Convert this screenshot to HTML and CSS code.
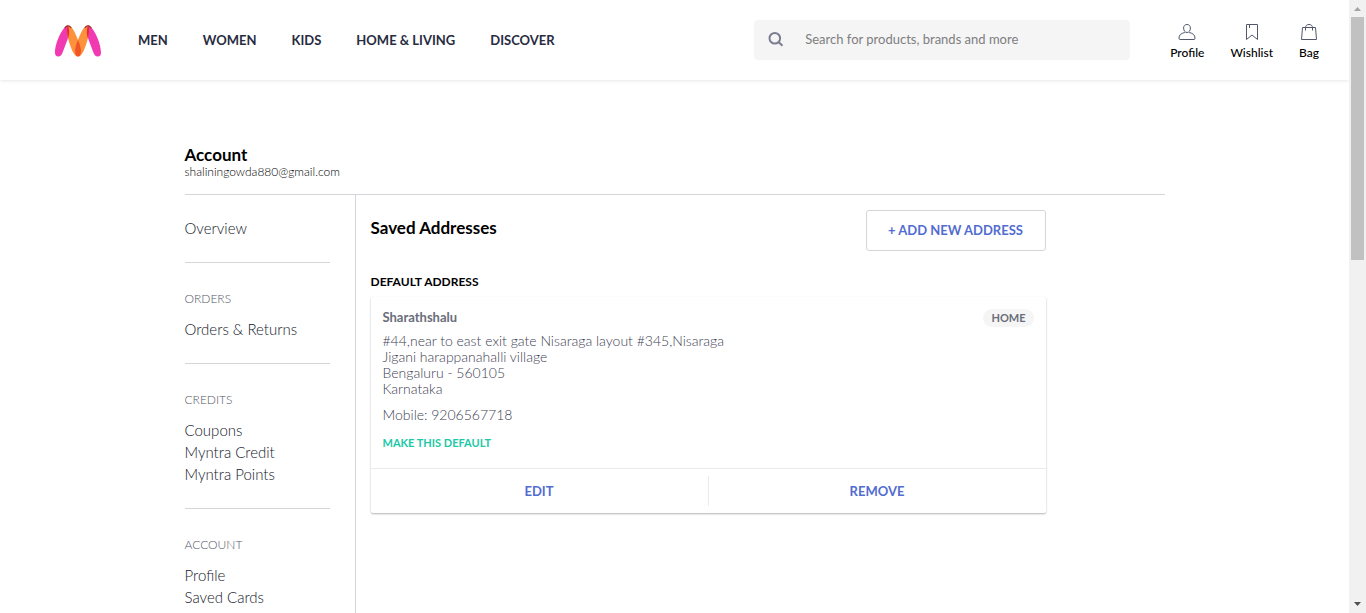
FILE: index.html
```html
<!DOCTYPE html>
<html lang="en">
<head>
<meta charset="utf-8">
<meta name="viewport" content="width=device-width, initial-scale=1">
<title>Saved Addresses</title>
<link rel="stylesheet" href="styles.css">
</head>
<body>
<div class="window">
  <div class="view">
    <header class="header">
      <a class="logo" href="#" aria-label="Myntra">
        <svg width="48" height="34" viewBox="0 0 48 34" aria-hidden="true">
          <path fill="#f13ab1" d="M13.5 1.2C8 4 1.2 18.500 1 28.500C.9 31 2.200 32.600 4 32.600C6.700 32.600 8 30.500 9 27.500L15.200 11Z"/>
          <path fill="#f13ab1" d="M34.500 1.200C40 4 46.800 18.500 47 28.500C47.100 31 45.800 32.600 44 32.600C41.300 32.600 40 30.500 39 27.500L32.800 11Z"/>
          <path fill="#fd913c" d="M13.500 1.200C18 1.500 20.500 7 24 16C27.500 7 30 1.500 34.500 1.200L34 14C31.500 23 28.500 32.600 24 32.600C19.500 32.600 16.500 23 14 14C12.800 9 12.800 5 13.500 1.200Z"/>
          <path fill="#f05524" d="M24 16C26 20.500 27.200 25 26.900 28C26.500 31 25.500 32.600 24 32.600C22.500 32.600 21.500 31 21.100 28C20.800 25 22 20.500 24 16Z"/>
          <path fill="#e22d2c" d="M13.500 1.200C15.500 4 15.700 9 14.200 14C12.700 9 12.700 5 13.500 1.200ZM34.500 1.200C32.500 4 32.300 9 33.800 14C35.300 9 35.300 5 34.500 1.200Z"/>
          <path fill="none" stroke="#a62b35" stroke-width="1.300" stroke-linecap="round" d="M11 3.800Q13.800 0 16.800 3.500M31.200 3.500Q34.200 0 37 3.800"/>
        </svg>
      </a>
      <nav class="nav">
        <a href="#">MEN</a>
        <a href="#">WOMEN</a>
        <a href="#">KIDS</a>
        <a href="#">HOME &amp; LIVING</a>
        <a href="#">DISCOVER</a>
      </nav>
      <form class="search">
        <button class="search-button" type="button" aria-label="Search">
          <svg width="16" height="16" viewBox="0 0 16 16" fill="none" stroke="#7b7d90" stroke-width="2" aria-hidden="true"><circle cx="6.800" cy="6.300" r="5.300"/><path d="M10.500 10L14.500 13.800"/></svg>
        </button>
        <input class="search-input" type="text" aria-label="Search" placeholder="Search for products, brands and more">
      </form>
      <div class="actions">
        <a href="#">
          <svg width="18" height="18" viewBox="0 0 18 18" aria-hidden="true"><path d="M9 1.500C6.900 1.500 5.600 2.800 5.600 5C5.600 7.600 7 9.500 9 9.500S12.400 7.600 12.400 5C12.400 2.800 11.100 1.500 9 1.500ZM6.800 9.500C3 10.300 1 12 1 15.200C1 16 1.300 16.500 2 16.500H16C16.700 16.500 17 16 17 15.200C17 12 15 10.300 11.200 9.500"/></svg>
          Profile
        </a>
        <a href="#">
          <svg width="18" height="18" viewBox="0 0 18 18" aria-hidden="true"><path d="M3.500 1.500H14.500V16.500L9 12L3.500 16.500ZM6.500 1.500V5"/></svg>
          Wishlist
        </a>
        <a href="#">
          <svg width="18" height="18" viewBox="0 0 18 18" aria-hidden="true"><path d="M2.500 4.500H15.500L16.500 16.500H1.500ZM5.500 7.500V5C5.500 2.500 6.800 1.500 9 1.500S12.500 2.500 12.500 5V7.500"/></svg>
          Bag
        </a>
      </div>
    </header>

    <main class="page">
      <div class="account">
        <h1>Account</h1>
        <p>shaliningowda880@gmail.com</p>
      </div>
      <div class="columns">
        <nav class="sidebar" aria-label="Account">
          <div class="group first">
            <a href="#">Overview</a>
          </div>
          <div class="group">
            <h2>ORDERS</h2>
            <a href="#">Orders &amp; Returns</a>
          </div>
          <div class="group">
            <h2>CREDITS</h2>
            <a href="#">Coupons</a>
            <a href="#">Myntra Credit</a>
            <a href="#">Myntra Points</a>
          </div>
          <div class="group">
            <h2>ACCOUNT</h2>
            <a href="#">Profile</a>
            <a href="#">Saved Cards</a>
          </div>
        </nav>
        <section class="content">
          <div class="content-head">
            <h2>Saved Addresses</h2>
            <button class="add" type="button">+ ADD NEW ADDRESS</button>
          </div>
          <h3 class="label">DEFAULT ADDRESS</h3>
          <article class="card">
            <div class="card-body">
              <div class="card-top">
                <h4>Sharathshalu</h4>
                <span class="tag">HOME</span>
              </div>
              <address>
                #44,near to east exit gate Nisaraga layout #345,Nisaraga<br>
                Jigani harappanahalli village<br>
                Bengaluru - 560105<br>
                Karnataka
              </address>
              <p class="mobile">Mobile: 9206567718</p>
              <button class="default" type="button">MAKE THIS DEFAULT</button>
            </div>
            <div class="card-actions">
              <button type="button">EDIT</button>
              <button type="button">REMOVE</button>
            </div>
          </article>
        </section>
      </div>
    </main>
  </div>
  <div class="scrollbar" aria-hidden="true">
    <svg width="17" height="17" viewBox="0 0 17 17"><path fill="#a3a3a3" d="M5 11L8.500 7L12 11Z"/></svg>
    <div class="track"><div class="thumb"></div></div>
    <svg width="17" height="17" viewBox="0 0 17 17"><path fill="#505050" d="M5 6L8.500 10L12 6Z"/></svg>
  </div>
</div>
</body>
</html>
```
FILE: styles.css
```css
* {
  box-sizing: border-box;
}

body,
h1,
h2,
h3,
h4,
p {
  margin: 0;
}

body {
  font-family: Lato, "Open Sans", sans-serif;
  font-size: 14px;
  color: #282c3f;
  background: #fff;
}

a {
  color: inherit;
  text-decoration: none;
}

button {
  padding: 0;
  border: 0;
  background: none;
  font: inherit;
  color: inherit;
  cursor: pointer;
}

.window {
  display: flex;
  height: 100vh;
}

.view {
  flex: 1;
  min-width: 0;
  overflow: hidden;
}

/* Header */
.header {
  display: flex;
  align-items: center;
  height: 80px;
  padding: 0 30px 0 54px;
  box-shadow: 0 0 4px rgba(0, 0, 0, 0.15);
}

.logo {
  display: flex;
  margin-right: 36px;
  padding-top: 2px;
}

.nav {
  display: flex;
  gap: 35px;
  font-size: 13px;
  font-weight: 700;
  white-space: nowrap;
}

.search {
  display: flex;
  flex: 0 1 376px;
  height: 40px;
  margin-left: auto;
  border-radius: 4px;
  background: #f5f5f6;
}

.search-button {
  display: flex;
  align-items: center;
  padding-left: 14px;
}

.search-input {
  flex: 1;
  min-width: 0;
  padding: 0 10px 2px 21px;
  border: 0;
  background: none;
  font: inherit;
  font-size: 13px;
  color: #696e79;
}

.search-input::placeholder {
  color: #7e7e7e;
}

.actions {
  display: flex;
  gap: 26px;
  margin-left: 40px;
  font-size: 12px;
  font-weight: 500;
  line-height: 16px;
  color: #000;
}

.actions a {
  display: flex;
  flex-direction: column;
  align-items: center;
  gap: 4px;
  padding-top: 4px;
}

.actions svg {
  fill: none;
  stroke: #53576a;
}

/* Account page */
.page {
  max-width: 980px;
  margin: 0 auto;
  padding-top: 66px;
}

.account {
  padding-bottom: 14px;
  border-bottom: 1px solid #d4d5d9;
  color: #000;
}

.account h1 {
  font-size: 17px;
  line-height: 18px;
}

.account p {
  font-size: 12px;
  font-weight: 300;
  line-height: 16px;
}

.columns {
  display: flex;
}

.sidebar {
  flex: 0 0 170px;
  padding-right: 25px;
}

.group {
  display: flex;
  flex-direction: column;
  padding: 27px 0 23px;
  border-bottom: 1px solid #d4d5d9;
  font-size: 15px;
  font-weight: 300;
  line-height: 22px;
  color: #14182b;
}

.first {
  padding-top: 22px;
}

.group h2 {
  margin-bottom: 10px;
  font-size: 12px;
  font-weight: 300;
  line-height: 18px;
  color: #535766;
}

.content {
  flex: 1;
  min-height: 480px;
  padding: 15px 119px 0 15px;
  border-left: 1px solid #d4d5d9;
}

.content-head {
  display: flex;
  justify-content: space-between;
  color: #000;
}

.content-head h2 {
  font-size: 17px;
  line-height: 36px;
}

.add {
  width: 180px;
  height: 41px;
  padding-bottom: 2px;
  border: 1px solid #d4d5d9;
  border-radius: 3px;
  font-size: 13px;
  font-weight: 700;
  color: #526cd0;
}

.label {
  margin: 22px 0 7px;
  font-size: 12px;
  line-height: 17px;
  color: #000;
}

.card {
  border-radius: 2px;
  box-shadow: 0 1px 2px rgba(0, 0, 0, 0.3);
  color: #696e79;
}

.card-body {
  padding: 12px 12px 17px;
  line-height: 16px;
}

.card-top {
  display: flex;
  justify-content: space-between;
  height: 16px;
  margin-bottom: 8px;
}

.card-top h4 {
  font-size: 13px;
}

.tag {
  height: 18px;
  padding: 0 8px;
  border-radius: 9px;
  background: #f5f5f6;
  font-size: 11px;
  font-weight: 700;
  line-height: 18px;
}

.card address {
  font-style: normal;
}

.card address,
.mobile {
  font-weight: 300;
  color: #3e4152;
}

.mobile {
  margin: 10px 0 12px;
}

.default {
  display: block;
  font-size: 11px;
  font-weight: 700;
  line-height: 16px;
  color: #20c9a6;
}

.card-actions {
  display: flex;
  padding: 7px 0;
  border-top: 1px solid #eaeaec;
}

.card-actions button {
  flex: 1;
  height: 30px;
  font-size: 13px;
  font-weight: 700;
  color: #526cd0;
}

.card-actions button + button {
  border-left: 1px solid #eaeaec;
}

/* Scrollbar */
.scrollbar {
  display: flex;
  flex-direction: column;
  width: 17px;
  background: #f1f1f1;
}

.track {
  flex: 1;
  padding: 0 2px;
}

.thumb {
  height: 42%;
  background: #c1c1c1;
}
```
